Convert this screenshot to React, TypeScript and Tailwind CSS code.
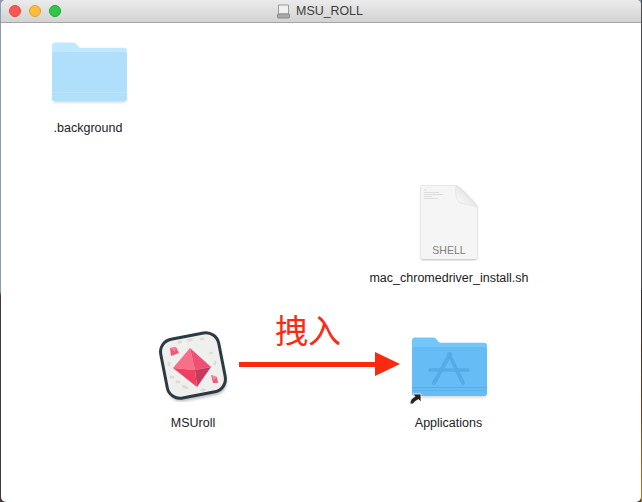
const FONT = "font-['Liberation_Sans',Arial,sans-serif]";

function FolderIcon({ id, back, front, band, children }: { id: string; back: string; front: string; band: string; children?: React.ReactNode }) {
  return (
    <svg className="overflow-visible" width="75" height="62" viewBox="0 0 75 62">
      <defs>
        <filter id={id} x="-10%" y="-10%" width="120%" height="125%">
          <feGaussianBlur stdDeviation="0.900" />
        </filter>
      </defs>
      <rect x="1" y="14" width="73" height="47" rx="3" fill="#000" opacity="0.13" filter={`url(#${id})`} />
      <path d="M0 3.500 a3 3 0 0 1 3-3 h18 a4 4 0 0 1 3 1.300 l2.500 3 a3 3 0 0 0 2.500 1 h43 a3 3 0 0 1 3 3 v47 a3 3 0 0 1-3 3 h-69 a3 3 0 0 1-3-3 z" fill={back} />
      <path d="M0 13 a3 3 0 0 1 3-3 h69 a3 3 0 0 1 3 3 v43 a3 3 0 0 1-3 3 h-69 a3 3 0 0 1-3-3 z" fill={front} />
      <rect x="0" y="50" width="75" height="1" fill={band} opacity="0.5" />
      <rect x="0" y="53" width="75" height="1" fill={band} opacity="0.35" />
      {children}
    </svg>
  );
}

function RollIcon() {
  return (
    <svg width="76" height="72" viewBox="0 0 76 72">
      <defs>
        <filter id="rollShadow" x="-20%" y="-20%" width="140%" height="140%">
          <feGaussianBlur stdDeviation="1.800" />
        </filter>
      </defs>
      <g transform="rotate(-11 37 35.500)">
        <rect x="8" y="9" width="59" height="60" rx="13" fill="#000" opacity="0.25" filter="url(#rollShadow)" />
        <rect x="7.500" y="5.500" width="59" height="60" rx="13" fill="#efefed" stroke="#2c3a44" strokeWidth="3" />
      </g>
      <g fill="#dcdcd6">
        <ellipse cx="24" cy="12" rx="2.500" ry="1.500" transform="rotate(-15 24 12)" />
        <ellipse cx="34" cy="10" rx="3" ry="1.500" transform="rotate(-15 34 10)" />
        <ellipse cx="46" cy="9" rx="2.500" ry="1.400" />
        <ellipse cx="55" cy="23" rx="2" ry="1.300" />
        <ellipse cx="13" cy="34" rx="1.500" ry="2.500" />
        <ellipse cx="16" cy="47" rx="2.500" ry="1.500" />
        <ellipse cx="29" cy="57" rx="3.500" ry="1.600" transform="rotate(25 29 57)" />
        <ellipse cx="22" cy="52" rx="2.500" ry="1.400" />
        <ellipse cx="47" cy="60" rx="2.500" ry="1.400" />
        <ellipse cx="59" cy="33" rx="1.400" ry="2.500" />
      </g>
      <polygon points="14,18 20,17 23,23 15,26" fill="#f4567a" />
      <polygon points="14,18 20,17 19,22" fill="#f97f98" />
      <polygon points="34,18 17,38 39,40" fill="#f7708a" />
      <polygon points="34,18 39,40 55,37" fill="#ef4f72" />
      <polygon points="39,40 41,57 55,37" fill="#c9385e" />
      <polygon points="17,38 39,40 41,57" fill="#f0405f" />
      <polygon points="55,45 61,47 62,53 57,53" fill="#ec5f7c" />
      <polygon points="55,45 61,47 58,50" fill="#f58ba0" />
    </svg>
  );
}

function ShellIcon() {
  return (
    <svg width="60" height="76" viewBox="0 0 60 76">
      <defs>
        <filter id="docShadow" x="-10%" y="-10%" width="120%" height="120%">
          <feGaussianBlur stdDeviation="0.800" />
        </filter>
        <linearGradient id="fold" x1="0" y1="1" x2="1" y2="0">
          <stop offset="0" stopColor="#ffffff" />
          <stop offset="1" stopColor="#d4d4d4" />
        </linearGradient>
      </defs>
      <path d="M2 1 H38 C44 6 50 13 58 21 V73 a2 2 0 0 1-2 2 H4 a2 2 0 0 1-2-2 z" fill="#000" opacity="0.28" filter="url(#docShadow)" />
      <path d="M2 1 H38 C44 6 50 13 58 21 V72 a2 2 0 0 1-2 2 H4 a2 2 0 0 1-2-2 z" fill="#f5f5f5" />
      <path d="M37 1 C36 8 37 14 40 17 C44 20 52 19 58 22 C54 14 44 5 37 1 z" fill="url(#fold)" stroke="#d6d6d6" strokeWidth="0.500" />
      <g stroke="#c4c4c4" strokeWidth="0.500">
        <line x1="5" y1="5" x2="8" y2="5" />
        <line x1="5" y1="7.500" x2="20" y2="7.500" />
        <line x1="5" y1="9.500" x2="24" y2="9.500" />
        <line x1="5" y1="11.500" x2="13" y2="11.500" />
        <line x1="5" y1="13.500" x2="19" y2="13.500" />
      </g>
    </svg>
  );
}

function DesktopItem({ label, children, className, labelClass }: { label: string; children: React.ReactNode; className: string; labelClass?: string }) {
  return (
    <div className={`absolute flex flex-col items-center justify-between ${className}`}>
      <div className="relative">{children}</div>
      <span className={`whitespace-nowrap text-[12.5px] leading-[15px] text-[#222] ${labelClass ?? ""}`}>{label}</span>
    </div>
  );
}

export default function App() {
  return (
    <div className={`flex h-[502px] w-[642px] overflow-hidden bg-gradient-to-b from-[#8a9cb2] from-[58%] to-[#3e3a3c] to-[59%] ${FONT}`}>
      <div className="relative ml-px flex min-w-0 flex-1 flex-col overflow-hidden rounded-t-[5px] rounded-b-[5px] bg-white">
        <div className="grid h-[23px] shrink-0 grid-cols-[1fr_auto_1fr] items-center border-b border-[#a5a5a5] bg-gradient-to-b from-[#ebebeb] to-[#d3d3d3]">
          <div className="flex gap-2 pl-[8px]">
            <span className="h-3 w-3 rounded-full border border-[#e2463f] bg-[#fc5753]" />
            <span className="h-3 w-3 rounded-full border border-[#e1a02c] bg-[#fdbc40]" />
            <span className="h-3 w-3 rounded-full border border-[#17a92c] bg-[#33c748]" />
          </div>
          <div className="flex items-center gap-[5px] pr-[3px]">
            <svg width="15" height="15" viewBox="0 0 15 15">
              <path d="M2.500 1 H12.500 V10 H2.500 z" fill="#f0f0f0" stroke="#9a9a9a" />
              <rect x="1.500" y="10" width="12" height="4" rx="1" fill="#a8a8a8" stroke="#8a8a8a" />
            </svg>
            <span className="text-[12.4px] leading-[16px] text-[#3d3d3d]">MSU_ROLL</span>
          </div>
          <div />
        </div>

        <div className="relative flex-1">
          <DesktopItem label=".background" labelClass="mr-[3px]" className="left-[51px] top-[19px] h-[94px] w-[75px]">
            <FolderIcon id="bgFolder" back="#c0e8fe" front="#afdffb" band="#c8e9fd" />
          </DesktopItem>

          <DesktopItem label="mac_chromedriver_install.sh" className="left-[418px] top-[162px] h-[101px] w-[60px]">
            <ShellIcon />
            <span className="absolute inset-x-0 top-[59px] text-center text-[10.5px] leading-[13px] text-[#808080]">SHELL</span>
          </DesktopItem>

          <DesktopItem label="MSUroll" labelClass="mr-[2px]" className="left-[155px] top-[307px] h-[101px] w-[76px]">
            <RollIcon />
          </DesktopItem>

          <DesktopItem label="Applications" labelClass="mr-[2px]" className="left-[411px] top-[314px] h-[94px] w-[75px]">
            <FolderIcon id="appFolder" back="#72c6f9" front="#66bdf6" band="#4c9ed8">
              <g stroke="#55abe6" fill="none" strokeLinecap="round">
                <path d="M38 17 L22 46" strokeWidth="4" />
                <path d="M37 17 L51 46" strokeWidth="4" />
                <path d="M18 33 H56" strokeWidth="3.500" />
              </g>
            </FolderIcon>
            <svg className="absolute left-[-3px] top-[55px]" width="13" height="13" viewBox="0 0 13 13">
              <path d="M1 12 C1 8 3 6 6 4.500 L4 2 H12 V10 L9.500 7.500 C7 9 5 10 4 12 z" fill="#222" stroke="#fff" strokeWidth="0.800" />
            </svg>
          </DesktopItem>

          <div className="absolute left-[274px] top-[285px] text-[33px] leading-[42px] text-[#fb2a12] font-['Noto_Sans_CJK_SC',sans-serif]">拽入</div>

          <svg className="absolute left-[237px] top-[327px]" width="164" height="28" viewBox="0 0 164 28">
            <rect x="1" y="12" width="138" height="5" fill="#f92a10" />
            <polygon points="137,2 162,14 137,26" fill="#f92a10" />
          </svg>
        </div>
      </div>
      <div className="flex w-px shrink-0 flex-col">
        <div className="h-[290px] bg-[#4b4a50]" />
        <div className="flex-1 bg-gradient-to-b from-[#2d2a2e] via-[#6a3320] to-[#a8801c]" />
      </div>
    </div>
  );
}
